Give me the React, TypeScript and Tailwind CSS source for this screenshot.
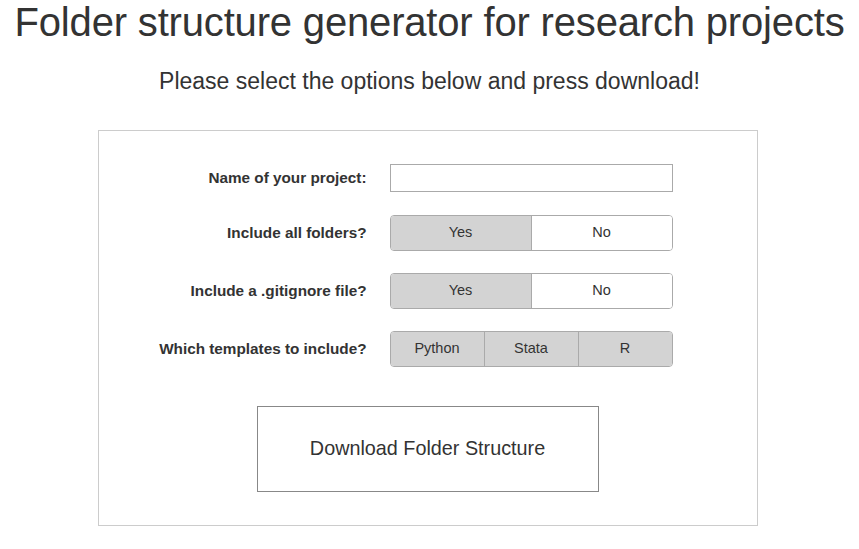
import React, { useState } from 'react'

const font = { fontFamily: '"Liberation Sans", Arial, sans-serif' }

interface SegProps {
  options: string[],
  selected: string[],
  onToggle: (opt: string) => void,
}

const Segmented: React.FC<SegProps> = ({ options, selected, onToggle }) => {
  return (
    <div className="flex w-[283px] h-[36px] rounded-[4px] border border-[#aaaaaa] overflow-hidden">
      {options.map((opt, i) => (
        <button key={opt} type="button" onClick={() => onToggle(opt)}
          className={`flex-1 flex items-center justify-center text-[14.5px] text-[#333333] ${i > 0 ? "border-l border-[#aaaaaa]" : ""} ${selected.includes(opt) ? "bg-[#d3d3d3]" : "bg-white"}`}
        >{opt}</button>
      ))}
    </div>
  )
}

const App: React.FC = () => {
  const [name, setName] = useState<string>("")
  const [folders, setFolders] = useState<string>("Yes")
  const [gitignore, setGitignore] = useState<string>("Yes")
  const [templates, setTemplates] = useState<string[]>(["Python", "Stata", "R"])

  const toggleTemplate = (t: string) => {
    setTemplates((prev) => prev.includes(t) ? prev.filter((p) => p !== t) : [...prev, t])
  }

  return (
    <div className="bg-white min-h-screen text-[#333333] flex flex-col items-center" style={font}>
      <h1 className="text-[40px] leading-[44px] mt-[0px] tracking-[-0.17px]">Folder structure generator for research projects</h1>
      <p className="text-[23px] leading-[28px] mt-[23px]">Please select the options below and press download!</p>
      <form className="mt-[35px] w-[660px] h-[396px] border border-[#cccccc] ml-[-4px] flex flex-col items-center pt-[33px]">
        <div className="self-start grid grid-cols-[268px_283px] gap-x-[23px] items-center">
          <label htmlFor="project" className="text-right text-[15.3px] font-bold">Name of your project:</label>
          <input id="project" type="text" value={name} onChange={(e) => setName(e.target.value)}
            className="w-[283px] h-[28px] border border-[#aaaaaa] outline-none px-2 text-[13px]" />

          <label className="text-right text-[15.3px] font-bold mt-[23px]">Include all folders?</label>
          <div className="mt-[23px]">
            <Segmented options={["Yes", "No"]} selected={[folders]} onToggle={setFolders} />
          </div>

          <label className="text-right text-[15.3px] font-bold mt-[22px]">Include a .gitignore file?</label>
          <div className="mt-[22px]">
            <Segmented options={["Yes", "No"]} selected={[gitignore]} onToggle={setGitignore} />
          </div>

          <label className="text-right text-[15.3px] font-bold mt-[22px]">Which templates to include?</label>
          <div className="mt-[22px]">
            <Segmented options={["Python", "Stata", "R"]} selected={templates} onToggle={toggleTemplate} />
          </div>
        </div>
        <button type="submit" className="mt-[39px] w-[342px] h-[86px] border border-[#888888] bg-white text-[19.8px] text-[#333333]">
          Download Folder Structure
        </button>
      </form>
    </div>
  )
}

export default App
